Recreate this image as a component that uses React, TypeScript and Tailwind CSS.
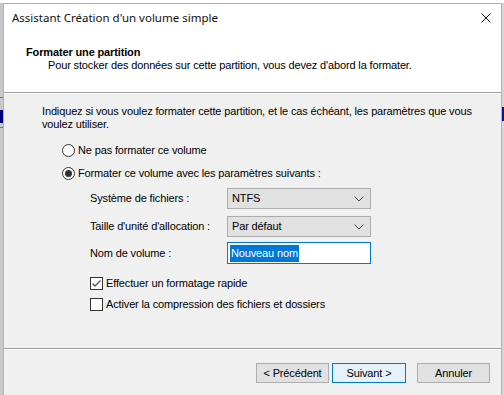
const sans = { fontFamily: '"Liberation Sans", Arial, sans-serif' };

function Chevron() {
    return (
        <svg width="10" height="6" viewBox="0 0 10 6" className="shrink-0">
            <path d="M0.5 0.5 L5 5 L9.5 0.5" fill="none" stroke="#444" strokeWidth="1"/>
        </svg>
    );
}

function Select({value}: { value: string }) {
    return (
        <div className="flex h-[21px] w-[144px] items-center justify-between border border-[#adadad] bg-[#e1e1e1] pl-[4px] pr-[6px] text-[11px] text-black">
            <span>{value}</span>
            <Chevron/>
        </div>
    );
}

function Radio({checked, label}: { checked?: boolean; label: string }) {
    return (
        <div className="flex h-[14px] items-center">
            <span className="flex h-[13px] w-[13px] items-center justify-center rounded-full border border-[#333] bg-white">
                {checked && <span className="h-[7px] w-[7px] rounded-full bg-[#333]"/>}
            </span>
            <span className="ml-[3px]">{label}</span>
        </div>
    );
}

function Checkbox({checked, label}: { checked?: boolean; label: string }) {
    return (
        <div className="flex h-[13px] items-center">
            <span className="flex h-[13px] w-[13px] items-center justify-center border border-[#333] bg-white">
                {checked && (
                    <svg width="11" height="11" viewBox="0 0 11 11">
                        <path d="M1.5 5.5 L4 8 L9.5 2.5" fill="none" stroke="#555" strokeWidth="1.3"/>
                    </svg>
                )}
            </span>
            <span className="ml-[3px]">{label}</span>
        </div>
    );
}

function Field({label, children}: { label: string; children: React.ReactNode }) {
    return (
        <div className="flex items-center">
            <span className="w-[137px]">{label}</span>
            {children}
        </div>
    );
}

export default function App() {
    return (
        <div className="flex h-[395px] w-[504px] flex-col overflow-hidden bg-white" style={sans}>
            <div className="h-[3px] shrink-0 bg-white"/>
            <div className="flex flex-1">
                {/* desktop behind, left edge */}
                <div className="flex w-[3px] flex-col bg-[#c9c9c9]">
                    <div className="mt-[94px] h-[1px] bg-[#777]"/>
                    <div className="mt-[12px] h-[13px] bg-[#000080]"/>
                    <div className="mt-[4px] h-[1px] bg-[#777]"/>
                </div>

                {/* window */}
                <div className="flex w-[499px] flex-col border-x border-t border-[#eba35e] bg-[#f0f0f0] text-[11px] tracking-[-0.14px] text-black">
                    <div className="flex h-[88px] flex-col bg-white">
                        <div className="flex h-[28px] items-center justify-between pl-[8px] pr-[10px]">
                            <span className="text-[11.5px] tracking-normal text-[#111]" style={{fontFamily: '"Noto Sans", "Open Sans", sans-serif'}}>
                                Assistant Création d'un volume simple
                            </span>
                            <svg width="10" height="10" viewBox="0 0 10 10">
                                <path d="M0.5 0.5 L9.5 9.5 M9.5 0.5 L0.5 9.5" stroke="#111" strokeWidth="1"/>
                            </svg>
                        </div>
                        <div className="mt-[14px] pl-[22px] font-bold leading-[13px]">Formater une partition</div>
                        <div className="pl-[44px] leading-[13px]">
                            Pour stocker des données sur cette partition, vous devez d'abord la formater.
                        </div>
                    </div>
                    <div className="h-[1px] bg-[#a0a0a0]"/>
                    <div className="h-[1px] bg-white"/>

                    <div className="flex h-[254px] flex-col pl-[38px]">
                        <p className="mt-[11px] w-[430px] leading-[13px]">
                            Indiquez si vous voulez formater cette partition, et le cas échéant, les paramètres que vous
                            voulez utiliser.
                        </p>
                        <div className="mt-[12px] pl-[20px]">
                            <Radio label="Ne pas formater ce volume"/>
                        </div>
                        <div className="mt-[9px] pl-[20px]">
                            <Radio checked label="Formater ce volume avec les paramètres suivants :"/>
                        </div>
                        <div className="mt-[8px] flex flex-col gap-[7px] pl-[48px]">
                            <Field label="Système de fichiers :">
                                <Select value="NTFS"/>
                            </Field>
                            <Field label="Taille d'unité d'allocation :">
                                <Select value="Par défaut"/>
                            </Field>
                        </div>
                        <div className="mt-[5px] pl-[48px]">
                            <Field label="Nom de volume :">
                                <div className="flex h-[22px] w-[144px] items-center border border-[#0078d7] bg-white pl-[2px]">
                                    <span className="bg-[#0078d7] px-[1px] leading-[17px] text-white">Nouveau nom</span>
                                </div>
                            </Field>
                        </div>
                        <div className="mt-[13px] pl-[48px]">
                            <Checkbox checked label="Effectuer un formatage rapide"/>
                        </div>
                        <div className="mt-[8px] pl-[48px]">
                            <Checkbox label="Activer la compression des fichiers et dossiers"/>
                        </div>
                    </div>

                    <div className="h-[1px] bg-[#a0a0a0]"/>
                    <div className="h-[1px] bg-white"/>

                    <div className="flex flex-1 items-start justify-end pr-[11px] pt-[13px]">
                        <button className="h-[20px] w-[73px] border border-[#adadad] bg-[#e1e1e1] text-[11px]">&lt; Précédent</button>
                        <button className="ml-[3px] h-[20px] w-[74px] border border-[#0078d7] bg-[#e5f1fb] text-[11px]">Suivant &gt;</button>
                        <button className="ml-[11px] h-[20px] w-[73px] border border-[#adadad] bg-[#e1e1e1] text-[11px]">Annuler</button>
                    </div>
                </div>

                {/* desktop behind, right edge */}
                <div className="flex flex-1 flex-col bg-[#d6d6d6]">
                    <div className="mt-[104px] h-[14px] bg-[#1010a0]"/>
                </div>
            </div>
        </div>
    );
}
